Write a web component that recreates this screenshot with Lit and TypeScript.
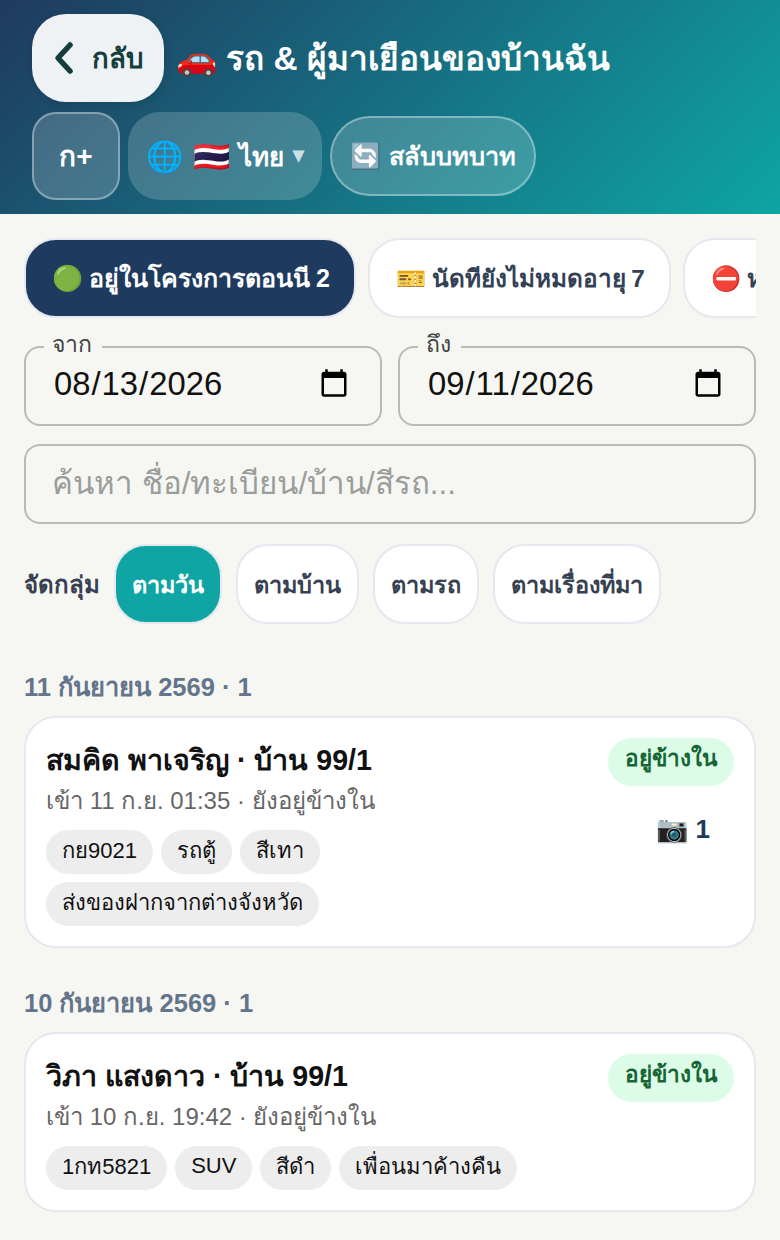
import { LitElement, html, css } from 'lit';
import { customElement } from 'lit/decorators.js';

type Visit = {
  name: string;
  meta: string;
  chips: string[];
  photos?: number;
};

const GROUPS: { title: string; visit: Visit }[] = [
  {
    title: '11 กันยายน 2569 · 1',
    visit: {
      name: 'สมคิด พาเจริญ · บ้าน 99/1',
      meta: 'เข้า 11 ก.ย. 01:35 · ยังอยู่ข้างใน',
      chips: ['กย9021', 'รถตู้', 'สีเทา', 'ส่งของฝากจากต่างจังหวัด'],
      photos: 1,
    },
  },
  {
    title: '10 กันยายน 2569 · 1',
    visit: {
      name: 'วิภา แสงดาว · บ้าน 99/1',
      meta: 'เข้า 10 ก.ย. 19:42 · ยังอยู่ข้างใน',
      chips: ['1กท5821', 'SUV', 'สีดำ', 'เพื่อนมาค้างคืน'],
    },
  },
];

@customElement('app-root')
export class AppRoot extends LitElement {
  static styles = css`
    :host {
      display: block;
      width: 780px;
      min-height: 1240px;
      background: #f6f7f3;
      font-family: 'Liberation Sans', 'Noto Sans', sans-serif;
      color: #111827;
      overflow: hidden;
    }
    * {
      box-sizing: border-box;
    }
    header {
      height: 214px;
      padding: 14px 32px;
      display: flex;
      flex-direction: column;
      gap: 10px;
      background: linear-gradient(135deg, #1f3a5f, #0ea5a4);
      color: #fff;
    }
    .top {
      display: flex;
      align-items: center;
      gap: 12px;
    }
    .back {
      display: flex;
      align-items: center;
      gap: 16px;
      width: 132px;
      height: 88px;
      padding-left: 20px;
      border-radius: 34px;
      background: rgba(255, 255, 255, 0.93);
      color: #143d3d;
      font-size: 27.5px;
      font-weight: 700;
      box-shadow: 0 2px 8px rgba(0, 0, 0, 0.12);
    }
    .back svg {
      width: 24px;
      height: 36px;
      flex: none;
    }
    h1 {
      margin: 0;
      font-size: 33.3px;
      font-weight: 700;
      white-space: nowrap;
    }
    .tools {
      display: flex;
      align-items: center;
      gap: 8px;
    }
    .font-btn {
      display: flex;
      align-items: center;
      justify-content: center;
      width: 88px;
      height: 88px;
      border-radius: 24px;
      border: 2px solid rgba(255, 255, 255, 0.35);
      background: rgba(255, 255, 255, 0.18);
      font-size: 28px;
      font-weight: 700;
    }
    .lang {
      display: flex;
      align-items: center;
      width: 194px;
      height: 88px;
      padding-left: 18px;
      border-radius: 32px;
      background: rgba(255, 255, 255, 0.18);
      font-size: 30px;
      font-weight: 700;
      word-spacing: 2px;
      white-space: nowrap;
    }
    .lang b {
      margin-left: 9px;
      font-size: 26px;
    }
    .caret {
      margin: 0 0 3px 9px;
      font-size: 22px;
      color: rgba(255, 255, 255, 0.75);
    }
    .switch {
      display: flex;
      align-items: center;
      justify-content: center;
      width: 206px;
      height: 80px;
      border-radius: 40px;
      border: 2px solid rgba(255, 255, 255, 0.35);
      background: rgba(255, 255, 255, 0.18);
      font-size: 25.3px;
      font-weight: 700;
      white-space: nowrap;
    }
    main {
      padding: 24px 24px 0;
    }
    .tabs {
      display: flex;
      gap: 12px;
      overflow: hidden;
    }
    .tab {
      flex: none;
      display: flex;
      align-items: center;
      height: 80px;
      padding: 0 24px 0 26px;
      border-radius: 32px;
      border: 2px solid #e6e8f0;
      background: #fff;
      color: #334155;
      font-size: 24.3px;
      font-weight: 700;
      word-spacing: -1px;
      white-space: nowrap;
    }
    .tab.on {
      background: #1f3a5f;
      color: #fff;
      font-size: 25px;
    }
    .dates {
      display: grid;
      grid-template-columns: 1fr 1fr;
      gap: 16px;
      margin-top: 8px;
    }
    fieldset {
      margin: 0;
      padding: 0 26px;
      height: 100px;
      min-width: 0;
      border: 2px solid #b9bbb4;
      border-radius: 16px;
    }
    legend {
      margin-left: -8px;
      padding: 0 10px 6px 8px;
      font-size: 23px;
      color: #444;
    }
    input[type='date'] {
      width: 100%;
      height: 36px;
      margin-top: -2px;
      padding: 0 0 0 1px;
      border: 0;
      outline: 0;
      background: transparent;
      font: 32.8px 'Liberation Sans', sans-serif;
      color: #111;
    }
    input[type='date']::-webkit-calendar-picker-indicator {
      width: 32px;
      height: 32px;
      padding: 0;
      margin: 0 4px 0 0;
    }
    .search {
      display: block;
      width: 100%;
      height: 80px;
      margin-top: 18px;
      padding: 0 26px;
      border: 2px solid #b9bbb4;
      border-radius: 16px;
      background: transparent;
      font: 31.3px 'Liberation Sans', sans-serif;
    }
    .search::placeholder {
      color: #9a9d9a;
    }
    .group-by {
      display: flex;
      align-items: center;
      gap: 14px;
      margin-top: 20px;
      font-size: 24px;
      font-weight: 700;
      color: #374151;
    }
    .group-by .opt {
      display: flex;
      align-items: center;
      height: 80px;
      padding: 0 16px;
      border-radius: 32px;
      border: 2px solid #e6e8f0;
      background: #fff;
      font-size: 23.5px;
    }
    .group-by .opt.on {
      background: #0ea5a4;
      color: #fff;
    }
    h2 {
      margin: 46px 0 12px;
      font-size: 25.5px;
      font-weight: 700;
      line-height: 34px;
      color: #64748b;
    }
    section + section h2 {
      margin-top: 38px;
    }
    .card {
      display: flex;
      justify-content: space-between;
      gap: 16px;
      padding: 20px;
      border: 2px solid #e6e8f0;
      border-radius: 32px;
      background: #fff;
    }
    .name {
      font-size: 28.6px;
      font-weight: 700;
      line-height: 44px;
      color: #111;
    }
    .meta {
      font-size: 24px;
      line-height: 38px;
      color: #666;
    }
    .chips {
      display: flex;
      flex-wrap: wrap;
      gap: 8px;
      margin-top: 10px;
    }
    .chip {
      display: flex;
      align-items: center;
      height: 44px;
      padding: 0 16px 4px;
      border-radius: 22px;
      background: #ededee;
      font-size: 22px;
      color: #111;
    }
    .side {
      display: flex;
      flex-direction: column;
      gap: 28px;
      flex: none;
    }
    .status {
      display: flex;
      align-items: center;
      height: 48px;
      padding: 0 17px 8px;
      border-radius: 24px;
      background: #dcfce7;
      color: #166534;
      font-size: 22.6px;
      font-weight: 700;
    }
    .photos {
      align-self: flex-end;
      margin-right: 24px;
      font-size: 26px;
      font-weight: 700;
      color: #1f3a5f;
    }
  `;

  renderVisit(v: Visit) {
    return html`
      <div class="card">
        <div>
          <div class="name">${v.name}</div>
          <div class="meta">${v.meta}</div>
          <div class="chips">${v.chips.map((c) => html`<span class="chip">${c}</span>`)}</div>
        </div>
        <div class="side">
          <span class="status">อยู่ข้างใน</span>
          ${v.photos ? html`<span class="photos">📷 ${v.photos}</span>` : ''}
        </div>
      </div>
    `;
  }

  render() {
    return html`
      <header>
        <div class="top">
          <div class="back">
            <svg viewBox="0 0 24 36" fill="none" stroke="currentColor" stroke-width="5.5" stroke-linecap="round" stroke-linejoin="round">
              <path d="M18 5 6 18l12 13" />
            </svg>
            <span>กลับ</span>
          </div>
          <h1>🚗 รถ &amp; ผู้มาเยือนของบ้านฉัน</h1>
        </div>
        <div class="tools">
          <div class="font-btn">ก+</div>
          <div class="lang">🌐 🇹🇭<b>ไทย</b><span class="caret">▾</span></div>
          <div class="switch">🔄 สลับบทบาท</div>
        </div>
      </header>
      <main>
        <div class="tabs">
          <div class="tab on">🟢 อยู่ในโครงการตอนนี 2</div>
          <div class="tab">🎫 นัดทียังไม่หมดอายุ 7</div>
          <div class="tab">⛔ หมดอายุ</div>
        </div>
        <div class="dates">
          <fieldset><legend>จาก</legend><input type="date" value="2026-08-13" /></fieldset>
          <fieldset><legend>ถึง</legend><input type="date" value="2026-09-11" /></fieldset>
        </div>
        <input class="search" placeholder="ค้นหา ชื่อ/ทะเบียน/บ้าน/สีรถ..." />
        <div class="group-by">
          <span>จัดกลุ่ม</span>
          <span class="opt on">ตามวัน</span>
          <span class="opt">ตามบ้าน</span>
          <span class="opt">ตามรถ</span>
          <span class="opt">ตามเรื่องที่มา</span>
        </div>
        ${GROUPS.map(
          (g) => html`
            <section>
              <h2>${g.title}</h2>
              ${this.renderVisit(g.visit)}
            </section>
          `
        )}
      </main>
    `;
  }
}
